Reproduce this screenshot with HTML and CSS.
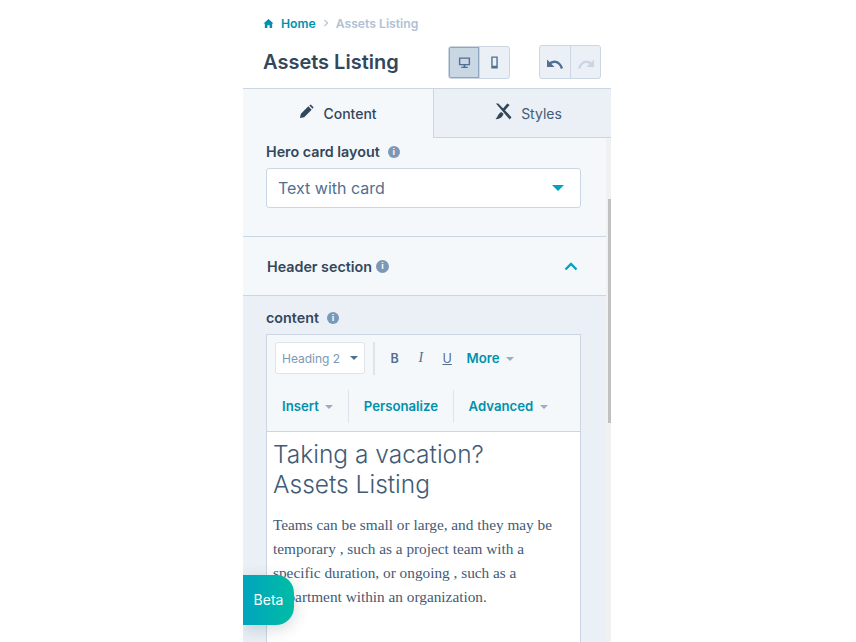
FILE: index.html
```html
<!DOCTYPE html>
<html lang="en">
<head>
  <meta charset="UTF-8" />
  <title>Assets Listing</title>
  <link rel="stylesheet" href="styles.css">
</head>
<body>

<div class="panel">
  <div class="top">
    <div class="crumbs">
      <svg class="home" viewBox="0 0 12 12"><path d="M6 1 L11.5 6 H10 V11 H7.2 V7.8 H4.8 V11 H2 V6 H.5 Z"/></svg>
      <a>Home</a>
      <svg class="sep" viewBox="0 0 6 10"><path d="M1 1 L5 5 L1 9"/></svg>
      <span>Assets Listing</span>
    </div>
    <div class="title-row">
      <h1>Assets Listing</h1>
      <div class="btn-group devices">
        <button class="on"><svg viewBox="0 0 14 14"><path d="M1 1.5 H13 V10 H8 V11.5 H10.5 V13 H3.5 V11.5 H6 V10 H1 Z M2.5 3 V8.5 H11.5 V3 Z" fill-rule="evenodd"/></svg></button>
        <button><svg viewBox="0 0 14 14"><path d="M3.5 0.5 H10.5 V13.5 H3.5 Z M5 2 V10.5 H9 V2 Z" fill-rule="evenodd"/></svg></button>
      </div>
      <div class="btn-group history">
        <button><svg viewBox="0 0 18 12"><path class="line" d="M3 5.5 C7 2 13 2 16 10"/><path d="M1 1 V8.5 H8.5 Z"/></svg></button>
        <button class="off"><svg viewBox="0 0 18 12"><path class="line" d="M15 5.5 C11 2 5 2 2 10"/><path d="M17 1 V8.5 H9.5 Z"/></svg></button>
      </div>
    </div>
  </div>

  <div class="tabs">
    <div class="tab active">
      <svg viewBox="0 0 16 16"><path d="M1 15 L2 10.5 L10 2.5 L13.5 6 L5.5 14 Z M11 1.5 L12.5 0.5 L15.5 3.5 L14.5 5 Z"/></svg>
      Content
    </div>
    <div class="tab styles">
      <svg viewBox="0 0 18 18"><path d="M1 0.5 L3.5 0.5 L17.5 15 L15.5 17.5 Z"/><path d="M13 0.5 L15.5 2 L9.5 9 L7.5 7 Z M6.5 9.5 L9 11.5 C8 15.5 4 17.5 0.5 17 C3 15 3 11.5 6.5 9.5 Z"/></svg>
      Styles
    </div>
  </div>

  <div class="body">
    <div class="scroll"><div class="thumb"></div></div>

    <section class="field">
      <label>Hero card layout <i class="info">i</i></label>
      <div class="select">Text with card <b class="caret"></b></div>
    </section>

    <div class="section-head">
      <span>Header section</span> <i class="info">i</i>
      <svg class="chev" viewBox="0 0 14 9"><path d="M1.5 7.5 L7 2 L12.5 7.5"/></svg>
    </div>

    <section class="rich">
      <label>content <i class="info">i</i></label>
      <div class="editor">
        <div class="toolbar">
          <div class="row">
            <div class="style-pick">Heading 2 <b class="mini dark"></b></div>
            <i class="rule"></i>
            <span class="fmt bold">B</span>
            <span class="fmt ital">I</span>
            <span class="fmt under">U</span>
            <a class="more">More <b class="mini"></b></a>
          </div>
          <div class="row second">
            <a>Insert <b class="mini"></b></a>
            <i class="rule"></i>
            <a>Personalize</a>
            <i class="rule"></i>
            <a>Advanced <b class="mini"></b></a>
          </div>
        </div>
        <div class="doc">
          <h2>Taking a vacation?<br>Assets Listing</h2>
          <p>Teams can be small or large, and they may be temporary , such as a project team with a specific duration, or ongoing , such as a department within an organization.</p>
        </div>
      </div>
    </section>
  </div>

  <div class="beta">Beta</div>
</div>

</body>
</html>
```

FILE: styles.css
```css
html, body {
  height: 100%;
}

body {
  margin: 0;
  background: white;
  font-family: 'Inter', sans-serif;
  color: #33475b;
  overflow: hidden;
}

.panel {
  position: relative;
  width: 368px;
  height: 642px;
  margin-left: 243px;
  overflow: hidden;
}

.top {
  height: 88px;
  box-sizing: border-box;
  padding: 15px 9px 0 20px;
}

.crumbs {
  display: flex;
  align-items: center;
  height: 16px;
  font-size: 12.2px;
  font-weight: 600;
  color: #b0c1d4;
}

.crumbs a {
  color: #0091ae;
  margin-left: 7px;
}

.home {
  width: 11px;
  height: 11px;
  fill: #0091ae;
}

.sep {
  width: 6px;
  height: 8px;
  margin: 0 7px;
  fill: none;
  stroke: #b0c1d4;
  stroke-width: 1.4;
}

.title-row {
  display: flex;
  align-items: center;
  margin-top: 14px;
}

h1 {
  flex: none;
  margin: 0;
  width: 185px;
  font-size: 20px;
  font-weight: 600;
  line-height: 34px;
}

.btn-group {
  flex: none;
  display: flex;
  height: 33px;
  box-sizing: border-box;
  border: 1px solid #cbd6e2;
  border-radius: 3px;
  background: #eaf0f6;
  overflow: hidden;
}

.history {
  height: 34px;
  margin-left: 29px;
}

button {
  display: flex;
  align-items: center;
  justify-content: center;
  width: 30px;
  padding: 0;
  background: none;
  border: none;
}

button + button {
  width: 30px;
  border-left: 1px solid #cbd6e2;
}

button svg {
  width: 13px;
  height: 13px;
  fill: #516f90;
}

button.on {
  background: #c9d6e4;
  box-shadow: inset 0 0 0 1px #8ea6c0;
}

.history button svg {
  width: 18px;
  height: 13px;
  margin-top: 4px;
}

.history .line {
  fill: none;
  stroke: #516f90;
  stroke-width: 2.4;
}

.history .off svg {
  fill: #cbd6e2;
}

.history .off .line {
  stroke: #cbd6e2;
}

.tabs {
  display: flex;
  height: 50px;
  box-sizing: border-box;
  border-top: 1px solid #cbd6e2;
}

.tab {
  flex: 1;
  display: flex;
  align-items: center;
  justify-content: center;
  font-size: 14px;
  background: #eaf0f6;
  border-bottom: 1px solid #cbd6e2;
}

.tab svg {
  width: 15px;
  height: 15px;
  margin: -4px 9px 0 0;
  fill: #33475b;
}

.tab.active {
  flex: none;
  width: 190px;
  font-weight: 500;
  background: #f5f8fa;
  border-right: 1px solid #cbd6e2;
  border-bottom: none;
}

.tab.styles {
  padding-left: 12px;
  color: #425b76;
}

.tab.styles svg {
  width: 17px;
  height: 17px;
}

.body {
  position: relative;
  height: 504px;
  background: #f5f8fa;
}

.scroll {
  position: absolute;
  top: 0;
  right: 0;
  bottom: 0;
  width: 5px;
  background: #f1f1f1;
  z-index: 2;
}

.thumb {
  margin: 61px 0 0 2px;
  height: 224px;
  background: #c1c1c1;
}

label {
  display: flex;
  align-items: center;
  font-size: 14.3px;
  font-weight: 600;
  line-height: 20px;
}

.info {
  display: inline-block;
  width: 12px;
  height: 12px;
  margin-left: 8px;
  border-radius: 50%;
  background: #7c98b6;
  color: white;
  font: bold 9px/12px 'Liberation Sans', sans-serif;
  text-align: center;
}

.field {
  height: 94px;
  padding: 4px 30px 0 23px;
  border-bottom: 1px solid #cbd6e2;
}

.select {
  display: flex;
  align-items: center;
  justify-content: space-between;
  height: 40px;
  box-sizing: border-box;
  margin-top: 6px;
  padding: 0 16px 0 11px;
  background: white;
  border: 1px solid #cbd6e2;
  border-radius: 3px;
  font-size: 16px;
  color: #516f90;
}

.caret {
  border-left: 6px solid transparent;
  border-right: 6px solid transparent;
  border-top: 6px solid #00a4bd;
}

.section-head {
  display: flex;
  align-items: center;
  height: 58px;
  padding: 0 33px 0 24px;
  font-size: 14.3px;
  font-weight: 600;
  border-bottom: 1px solid #cbd6e2;
}

.section-head .info {
  width: 13px;
  height: 13px;
  margin-left: 4px;
  line-height: 13px;
}

.chev {
  width: 14px;
  height: 9px;
  margin-left: auto;
  fill: none;
  stroke: #00a4bd;
  stroke-width: 2.4;
}

.rich {
  height: 346px;
  padding: 12px 30px 0 23px;
  background: #eaf0f6;
}

.editor {
  height: 330px;
  margin-top: 6px;
  border: 1px solid #cbd6e2;
  border-bottom: none;
  background: white;
}

.toolbar {
  background: #f5f8fa;
  border-bottom: 1px solid #cbd6e2;
  height: 96px;
  font-size: 13.2px;
  font-weight: 600;
}

.toolbar a {
  color: #0091ae;
}

.row {
  display: flex;
  align-items: center;
  height: 48px;
  box-sizing: border-box;
  padding: 0 0 2px 8px;
}

.row.second {
  padding-left: 15px;
}

.row .rule {
  width: 1.5px;
  height: 33px;
  background: #dfe3eb;
}

.style-pick {
  display: flex;
  align-items: center;
  justify-content: space-between;
  width: 90px;
  height: 32px;
  box-sizing: border-box;
  padding: 0 6px;
  background: white;
  border: 1px solid #dfe3eb;
  border-radius: 3px;
  font-size: 12px;
  font-weight: 400;
  color: #7c98b6;
}

.row .style-pick + .rule {
  margin: 0 16px 0 8px;
}

.row.second .rule {
  margin: 0 14.5px;
}

.mini {
  display: inline-block;
  margin-left: 3px;
  vertical-align: 2px;
  border-left: 4px solid transparent;
  border-right: 4px solid transparent;
  border-top: 4px solid #99acc2;
}

.mini.dark {
  border-top-color: #516f90;
}

.fmt {
  width: 28px;
  color: #516f90;
  font-size: 12.5px;
}

.ital {
  width: 24px;
  font-style: italic;
  font-weight: 400;
  font-family: 'Liberation Serif', serif;
  font-size: 14px;
}

.under {
  width: 24px;
  font-weight: 400;
  text-decoration: underline;
}

.doc {
  padding: 7px 6px 0;
}

.doc h2 {
  margin: 0;
  font-size: 24.5px;
  font-weight: 300;
  line-height: 30px;
  color: #425b76;
}

.doc p {
  margin: 14px 14px 0 0;
  font-family: 'Liberation Serif', serif;
  font-size: 15.3px;
  line-height: 24px;
  color: #425b76;
}

.beta {
  position: absolute;
  left: 0;
  top: 575px;
  z-index: 3;
  width: 51px;
  height: 50px;
  border-radius: 0 18px 18px 0;
  background: linear-gradient(90deg, #00a4bd, #00bda5);
  box-shadow: 0 4px 16px rgba(45, 62, 80, 0.2);
  color: white;
  font-size: 14px;
  line-height: 50px;
  text-align: center;
}
```
